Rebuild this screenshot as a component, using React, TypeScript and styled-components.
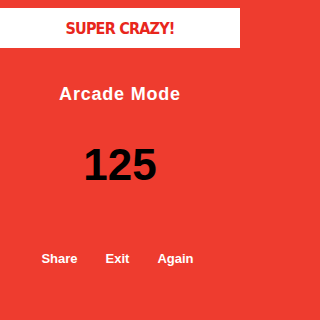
import styled, { createGlobalStyle } from "styled-components";

const GlobalStyle = createGlobalStyle`
  html, body {
    margin: 0;
    padding: 0;
    background: #ee3c2f;
  }
  #root {
    width: 240px;
    height: 320px;
  }
`;

const Screen = styled.div`
  width: 240px;
  height: 320px;
  box-sizing: border-box;
  padding-top: 8px;
  background: #ee3c2f;
  display: flex;
  flex-direction: column;
  align-items: center;
  font-family: "Liberation Sans", Arial, sans-serif;
  color: #fff;
`;

const Banner = styled.div`
  width: 100%;
  height: 40px;
  background: #fff;
  display: flex;
  align-items: center;
  justify-content: center;
  font-family: "DejaVu Sans Condensed", "DejaVu Sans", sans-serif;
  font-weight: bold;
  font-size: 16px;
  letter-spacing: -0.8px;
  color: #e8261c;
`;

const ModeTitle = styled.h1`
  margin: 36px 0 0;
  font-size: 18px;
  font-weight: bold;
  letter-spacing: 0.8px;
  line-height: 20px;
`;

const Score = styled.div`
  margin-top: 35px;
  font-size: 44px;
  font-weight: bold;
  line-height: 52px;
  color: #000;
`;

const Actions = styled.div`
  margin-top: 60px;
  padding-right: 5px;
  display: flex;
  gap: 28px;
`;

const Action = styled.button`
  border: none;
  background: none;
  padding: 0;
  font-family: inherit;
  font-size: 13px;
  line-height: 15px;
  font-weight: bold;
  color: #fff;
  cursor: pointer;
`;

export default function App() {
  return (
    <>
      <GlobalStyle />
      <Screen>
        <Banner>SUPER CRAZY!</Banner>
        <ModeTitle>Arcade Mode</ModeTitle>
        <Score>125</Score>
        <Actions>
          <Action>Share</Action>
          <Action>Exit</Action>
          <Action>Again</Action>
        </Actions>
      </Screen>
    </>
  );
}
